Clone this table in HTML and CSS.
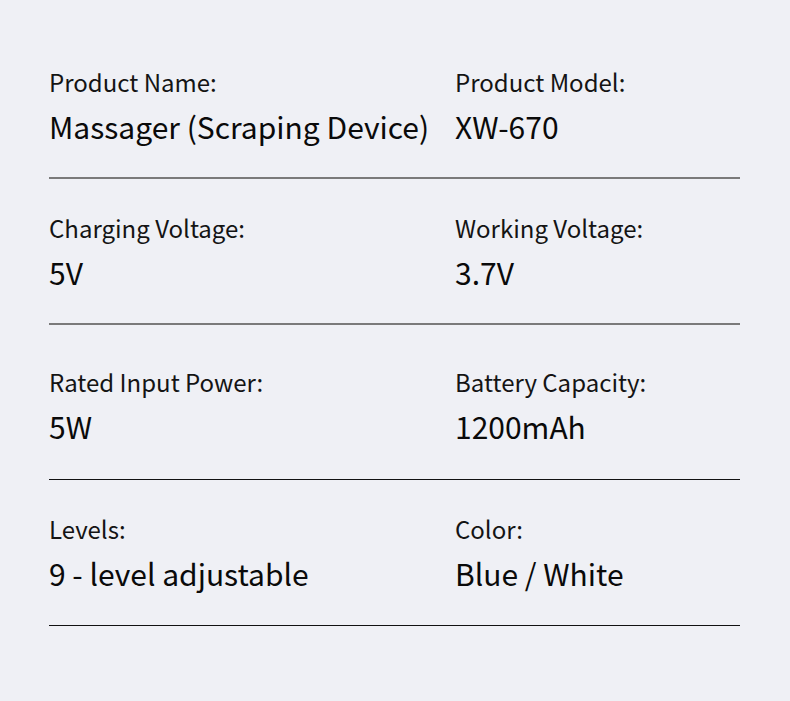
FILE: index.html
```html
<!DOCTYPE html>
<html lang="en">
<head>
<meta charset="utf-8">
<title>Specifications</title>
<link rel="stylesheet" href="styles.css">
</head>
<body>
<main class="specs">
  <section class="row row-first line-gray">
    <div class="cell"><div class="label">Product Name:</div><div class="value">Massager (Scraping Device)</div></div>
    <div class="cell"><div class="label">Product Model:</div><div class="value">XW-670</div></div>
  </section>
  <section class="row line-gray">
    <div class="cell"><div class="label">Charging Voltage:</div><div class="value">5V</div></div>
    <div class="cell"><div class="label">Working Voltage:</div><div class="value">3.7V</div></div>
  </section>
  <section class="row row-tall line-dark">
    <div class="cell"><div class="label">Rated Input Power:</div><div class="value">5W</div></div>
    <div class="cell"><div class="label">Battery Capacity:</div><div class="value">1200mAh</div></div>
  </section>
  <section class="row row-last line-dark">
    <div class="cell"><div class="label">Levels:</div><div class="value">9 - level adjustable</div></div>
    <div class="cell"><div class="label">Color:</div><div class="value">Blue / White</div></div>
  </section>
</main>
</body>
</html>
```
FILE: styles.css
```css
html, body {
  margin: 0;
  padding: 0;
  background: #eff0f5;
}
body {
  font-family: "Noto Sans CJK SC", "Noto Sans", sans-serif;
  color: #111;
  width: 790px;
  height: 701px;
  overflow: hidden;
}
.specs {
  margin-left: 49px;
  width: 691px;
}
.row {
  display: grid;
  grid-template-columns: 406px 1fr;
  padding: 34px 0 31px;
}
.row-first { padding-top: 67px; }
.row-tall { padding-top: 42px; padding-bottom: 33px; }
.row-last { padding-bottom: 32px; }
.line-gray { border-bottom: 2px solid #7a7a7a; }
.line-dark { border-bottom: 1px solid #111; }
.label {
  font-size: 24px;
  line-height: 30px;
  color: #141414;
}
.value {
  margin-top: 9px;
  font-size: 30px;
  line-height: 40px;
  color: #0a0a0a;
}
```
